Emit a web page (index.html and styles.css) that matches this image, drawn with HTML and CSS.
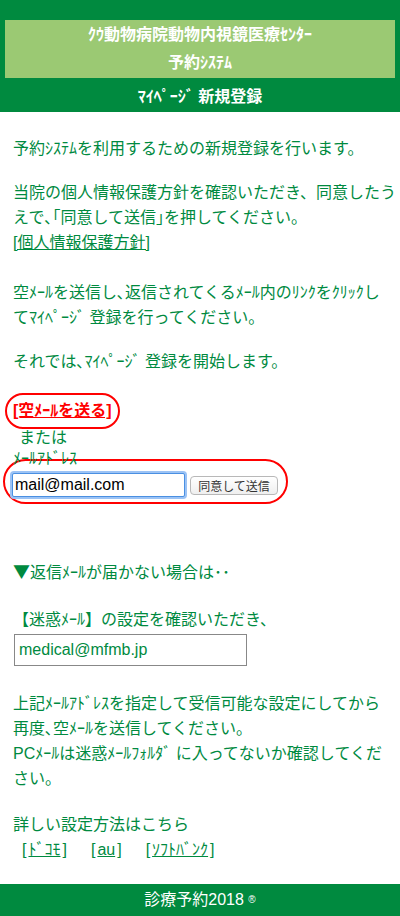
FILE: index.html
```html
<!DOCTYPE html>
<html lang="ja">
<head>
    <meta charset="UTF-8">
    <meta name="viewport" content="width=device-width, initial-scale=1.0">
    <title>ﾏｲﾍﾟｰｼﾞ 新規登録 - 予約ｼｽﾃﾑ</title>
    <link rel="stylesheet" href="styles.css">
</head>
<body>

    <!-- Header -->
    <header class="site-header">
        <div class="brand">
            <p>ｸｳ動物病院動物内視鏡医療ｾﾝﾀｰ</p>
            <p>予約ｼｽﾃﾑ</p>
        </div>
        <h1 class="page-title">ﾏｲﾍﾟｰｼﾞ 新規登録</h1>
    </header>

    <!-- Main -->
    <main class="content">
        <p class="para">予約ｼｽﾃﾑを利用するための新規登録を行います。</p>

        <p class="para para-link">
            当院の個人情報保護方針を確認いただき、同意したう<br>
            えで､｢同意して送信｣を押してください。<br>
            <a href="#" class="link">[個人情報保護方針]</a>
        </p>

        <p class="para">
            空ﾒｰﾙを送信し､返信されてくるﾒｰﾙ内のﾘﾝｸをｸﾘｯｸし<br>
            てﾏｲﾍﾟｰｼﾞ 登録を行ってください。
        </p>

        <p class="para">それでは､ﾏｲﾍﾟｰｼﾞ 登録を開始します。</p>

        <div class="send-row">
            <a href="#" class="send-mail">[空ﾒｰﾙを送る]</a>
        </div>
        <p class="or">または</p>
        <p class="mail-label">ﾒｰﾙｱﾄﾞﾚｽ</p>
        <form class="mail-form" onsubmit="return false">
            <input type="email" class="mail-input" value="mail@mail.com">
            <button type="submit" class="mail-submit">同意して送信</button>
        </form>

        <p class="notice"><span class="arrow">▼</span>返信ﾒｰﾙが届かない場合は･･</p>

        <p class="spam">【迷惑ﾒｰﾙ】の設定を確認いただき、</p>
        <div class="address-box">medical@mfmb.jp</div>

        <p class="para after-box">
            上記ﾒｰﾙｱﾄﾞﾚｽを指定して受信可能な設定にしてから<br>
            再度､空ﾒｰﾙを送信してください。<br>
            PCﾒｰﾙは迷惑ﾒｰﾙﾌｫﾙﾀﾞ に入ってないか確認してくだ<br>
            さい。
        </p>

        <p class="help">詳しい設定方法はこちら</p>
        <ul class="carriers">
            <li>[<a href="#">ﾄﾞｺﾓ</a>]</li>
            <li>[<a href="#">au</a>]</li>
            <li>[<a href="#">ｿﾌﾄﾊﾞﾝｸ</a>]</li>
        </ul>
    </main>

    <!-- Footer -->
    <footer class="site-footer">
        <p>診療予約2018 <span class="mark">®</span></p>
    </footer>

</body>
</html>
```

FILE: styles.css
```css
body {
    font-family: "Liberation Sans", "Noto Sans CJK JP", sans-serif;
    background-color: #fff;
    color: #008a3f;
    margin: 0;
    padding: 0;
}

p {
    margin: 0;
}

/* Header */
.site-header {
    background-color: #008a3f;
    color: #fff;
    padding-top: 20px;
    text-align: center;
}

.brand {
    background-color: #9bc973;
    margin: 0 5px;
    height: 58px;
    font-size: 16px;
    font-weight: bold;
    line-height: 28px;
    padding-top: 1px;
    box-sizing: border-box;
}

.page-title {
    margin: 0;
    font-size: 16px;
    font-weight: bold;
    line-height: 30px;
    padding: 4px 0 0;
}

/* Content */
.content {
    padding: 24px 0 22px 13px;
    font-size: 16px;
    line-height: 25px;
}

.para {
    margin-bottom: 19px;
}

.para-link {
    margin-bottom: 25px;
}

.link {
    color: #008a3f;
}

.send-row {
    display: flex;
    margin-left: -8px;
}

.send-mail {
    display: block;
    color: #f00;
    font-weight: bold;
    border: 2px solid #f00;
    border-radius: 20px;
    padding: 3px 6px 4px;
}

.or {
    line-height: 17px;
    padding-left: 6px;
}

.mail-label {
    line-height: 26px;
}

.mail-form {
    display: flex;
    align-items: center;
    gap: 5px;
    width: 285px;
    box-sizing: border-box;
    margin: -13px 0 0 -10px;
    padding: 12px 8px 5px 7px;
    border: 2px solid #f00;
    border-radius: 23px;
}

.mail-input {
    width: 173px;
    height: 24px;
    box-sizing: border-box;
    font-family: "Liberation Sans", sans-serif;
    font-size: 16px;
    color: #000;
    padding: 0 2px;
    border: 1px solid #4a90e2;
    border-radius: 2px;
    box-shadow: 0 0 0 2px #9cc3f5;
    outline: none;
}

.mail-submit {
    width: 88px;
    height: 19px;
    padding: 0;
    font-family: "Noto Sans CJK JP", sans-serif;
    font-size: 12px;
    line-height: 17px;
    color: #333;
    background: linear-gradient(#fff, #efefef);
    border: 1px solid #b8b8b8;
    border-radius: 4px;
}

.notice {
    margin-top: 56px;
    height: 25px;
}

.arrow {
    font-family: "Noto Sans CJK JP", sans-serif;
    font-size: 17px;
    line-height: 0;
}

.spam {
    margin-top: 22px;
}

.address-box {
    width: 233px;
    height: 32px;
    box-sizing: border-box;
    margin: 2px 0 0 1px;
    padding: 0 4px;
    border: 1px solid #888;
    line-height: 30px;
}

.after-box {
    margin-top: 25px;
    margin-bottom: 21px;
}

.carriers {
    list-style: none;
    margin: 0;
    padding: 0 0 0 9px;
    display: flex;
    gap: 24px;
}

.carriers a {
    color: #008a3f;
    margin: 0 2px;
}

/* Footer */
.site-footer {
    background-color: #008a3f;
    color: #fff;
    text-align: center;
    font-size: 16px;
    line-height: 32px;
    height: 32px;
}

.site-footer .mark {
    font-size: 10px;
    vertical-align: 2px;
}
```
